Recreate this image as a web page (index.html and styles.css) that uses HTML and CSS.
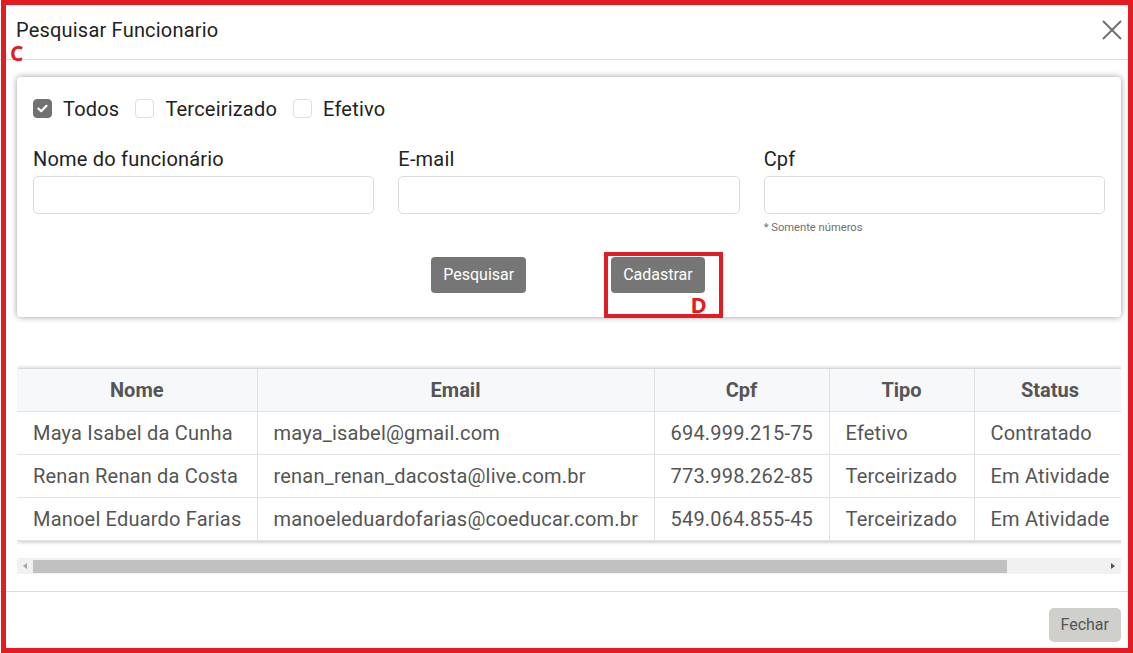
FILE: index.html
```html
<!DOCTYPE html>
<html lang="pt-BR">
<head>
<meta charset="utf-8">
<title>Pesquisar Funcionario</title>
<link rel="stylesheet" href="styles.css">
</head>
<body>
<div class="modal">
  <header class="modal-header">
    <h5 class="modal-title">Pesquisar Funcionario</h5>
    <button class="close" type="button" aria-label="Fechar">
      <svg width="20" height="20" viewBox="0 0 20 20"><path d="M1 1L19 19M19 1L1 19" stroke="#707070" stroke-width="2" fill="none"/></svg>
    </button>
  </header>

  <div class="modal-body">
    <section class="card">
      <div class="checks">
        <label class="check"><span class="box checked"><svg width="11" height="9" viewBox="0 0 11 9"><path d="M1.5 4.6L4.2 7.2L9.5 1.8" stroke="#fff" stroke-width="2.2" fill="none" stroke-linecap="round" stroke-linejoin="round"/></svg></span>Todos</label>
        <label class="check"><span class="box"></span>Terceirizado</label>
        <label class="check"><span class="box"></span>Efetivo</label>
      </div>

      <div class="fields">
        <div class="field">
          <label class="field-label">Nome do funcionário</label>
          <input class="input" type="text">
        </div>
        <div class="field">
          <label class="field-label">E-mail</label>
          <input class="input" type="text">
        </div>
        <div class="field">
          <label class="field-label">Cpf</label>
          <input class="input" type="text">
          <small class="hint">* Somente números</small>
        </div>
      </div>

      <div class="actions">
        <button class="btn" type="button">Pesquisar</button>
        <span class="mark-d">
          <button class="btn" type="button">Cadastrar</button>
          <span class="mark-d-box"><span class="mark-letter">D</span></span>
        </span>
      </div>
    </section>

    <div class="table-wrap">
      <table class="grid">
        <colgroup>
          <col class="c-nome"><col class="c-email"><col class="c-cpf"><col class="c-tipo"><col class="c-status">
        </colgroup>
        <thead>
          <tr><th>Nome</th><th>Email</th><th>Cpf</th><th>Tipo</th><th>Status</th></tr>
        </thead>
        <tbody>
          <tr><td>Maya Isabel da Cunha</td><td>maya_isabel@gmail.com</td><td>694.999.215-75</td><td>Efetivo</td><td>Contratado</td></tr>
          <tr><td>Renan Renan da Costa</td><td>renan_renan_dacosta@live.com.br</td><td>773.998.262-85</td><td>Terceirizado</td><td>Em Atividade</td></tr>
          <tr><td>Manoel Eduardo Farias</td><td>manoeleduardofarias@coeducar.com.br</td><td>549.064.855-45</td><td>Terceirizado</td><td>Em Atividade</td></tr>
        </tbody>
      </table>
    </div>

    <div class="hscroll">
      <span class="sb-btn sb-left"></span>
      <span class="sb-track"><span class="sb-thumb"></span></span>
      <span class="sb-btn sb-right"></span>
    </div>
  </div>

  <footer class="modal-footer">
    <button class="btn btn-light" type="button">Fechar</button>
  </footer>

  <div class="annot-frame"></div>
  <span class="annot-c">C</span>
</div>
</body>
</html>
```

FILE: styles.css
```css
* { box-sizing: border-box; }

html, body {
  margin: 0;
  padding: 0;
  background: #fff;
}

body {
  font-family: Roboto, "Liberation Sans", Arial, sans-serif;
  color: #212529;
}

.modal {
  position: relative;
  width: 1133px;
  height: 653px;
  overflow: hidden;
  background: #fff;
}

/* header */
.modal-header {
  height: 60px;
  display: flex;
  align-items: center;
  justify-content: space-between;
  padding: 0 11px 0 16px;
  border-bottom: 1px solid #dcdcdc;
}

.modal-title {
  margin: 0;
  font-size: 20px;
  letter-spacing: 0.2px;
  font-weight: 400;
  line-height: 22px;
  color: #222;
  padding-top: 0;
}

.close {
  border: 0;
  background: none;
  padding: 0;
  width: 20px;
  height: 20px;
  display: flex;
  margin-top: 1px;
}

/* body */
.modal-body {
  padding: 17px 12px 17px 17px;
}

.card {
  height: 240px;
  padding: 22px 16px 0 16px;
  border-radius: 4px;
  background: #fff;
  box-shadow: 0 0 6px rgba(0, 0, 0, 0.4);
}

.checks {
  display: flex;
  align-items: center;
  height: 19px;
}

.check {
  display: flex;
  align-items: center;
  font-size: 20px;
  letter-spacing: 0.2px;
  line-height: 22px;
  color: #222;
  margin-right: 16px;
  padding-top: 1px;
}

.box {
  width: 19px;
  height: 19px;
  border: 1px solid #dedede;
  border-radius: 4px;
  margin-right: 11px;
  margin-top: -1px;
  display: flex;
  align-items: center;
  justify-content: center;
  background: #fff;
}

.box.checked {
  background: #727272;
  border-color: #727272;
}

.fields {
  display: grid;
  grid-template-columns: 1fr 1fr 1fr;
  column-gap: 24px;
  align-items: start;
  margin-top: 30px;
  height: 87px;
}

.field {
  display: flex;
  flex-direction: column;
}

.field-label {
  font-size: 20px;
  letter-spacing: 0.2px;
  line-height: 22px;
  color: #222;
  margin-bottom: 6px;
}

.input {
  height: 38px;
  border: 1px solid #dcdcdc;
  border-radius: 5px;
  background: #fff;
  font: inherit;
}

.hint {
  margin-top: 7px;
  font-size: 11.2px;
  line-height: 14px;
  color: #707070;
}

.actions {
  display: flex;
  justify-content: center;
  gap: 85px;
  margin-top: 22px;
  padding-right: 2px;
}

.btn {
  height: 36px;
  padding: 0 12px;
  border: 0;
  border-radius: 4px;
  background: #767676;
  color: #fff;
  font-family: Roboto, "Liberation Sans", Arial, sans-serif;
  font-size: 16px;
  font-weight: 400;
  line-height: 36px;
}

.mark-d {
  position: relative;
  display: inline-flex;
}

.mark-d-box {
  position: absolute;
  left: -7px;
  top: -5px;
  right: -18px;
  bottom: -25px;
  border: 4px solid #e31b23;
}

.mark-letter {
  position: absolute;
  right: 12px;
  bottom: -3px;
  font-family: "Open Sans", "DejaVu Sans", sans-serif;
  font-weight: 700;
  font-size: 22px;
  line-height: 25px;
  color: #e31b23;
}

/* table */
.table-wrap {
  margin-top: 48px;
  padding: 4px 0 5px;
  overflow: hidden;
}

.grid {
  border-collapse: collapse;
  table-layout: fixed;
  width: 1109px;
  box-shadow: 0 0 5px rgba(0, 0, 0, 0.35);
  font-size: 20px;
  letter-spacing: 0.2px;
  color: #555;
}

.c-nome { width: 240px; }
.c-email { width: 397px; }
.c-cpf { width: 175px; }
.c-tipo { width: 145px; }
.c-status { width: 152px; }

.grid th,
.grid td {
  border: 1px solid #dfe1e5;
  padding: 0 16px;
  white-space: nowrap;
  text-align: left;
}

.grid tr:first-child th { border-top: 0; }
.grid th:first-child,
.grid td:first-child { border-left: 0; }

.grid th {
  height: 42px;
  background: #f7f8fa;
  font-weight: 700;
  letter-spacing: 0;
  text-align: center;
  color: #555;
}

.grid td {
  height: 43px;
}

/* fake horizontal scrollbar */
.hscroll {
  margin-top: 12px;
  height: 16px;
  display: flex;
  background: #f1f1f1;
}

.sb-btn {
  width: 16px;
  height: 16px;
  position: relative;
}

.sb-left::after,
.sb-right::after {
  content: "";
  position: absolute;
  top: 5px;
  width: 0;
  height: 0;
  border-top: 3.5px solid transparent;
  border-bottom: 3.5px solid transparent;
}

.sb-left::after {
  left: 6px;
  border-right: 4px solid #a3a3a3;
}

.sb-right::after {
  left: 6px;
  border-left: 4px solid #505050;
}

.sb-track {
  flex: 1;
  padding: 2px 0 1px;
  display: flex;
}

.sb-thumb {
  width: 974px;
  background: #c1c1c1;
}

/* footer */
.modal-footer {
  border-top: 1px solid #dcdcdc;
  display: flex;
  justify-content: flex-end;
  padding: 16px 12px 0 0;
}

.btn-light {
  height: 34px;
  line-height: 34px;
  background: #cfcfcc;
  color: #555;
  font-size: 16px;
  font-weight: 400;
  border-radius: 5px;
}

/* annotations */
.annot-frame {
  position: absolute;
  left: 1px;
  top: 0;
  right: 0;
  bottom: 0;
  border: 5px solid #e31b23;
  pointer-events: none;
}

.annot-c {
  position: absolute;
  left: 10px;
  top: 39px;
  font-family: "Open Sans", "DejaVu Sans", sans-serif;
  font-weight: 700;
  font-size: 21px;
  line-height: 28px;
  color: #e31b23;
}
```
